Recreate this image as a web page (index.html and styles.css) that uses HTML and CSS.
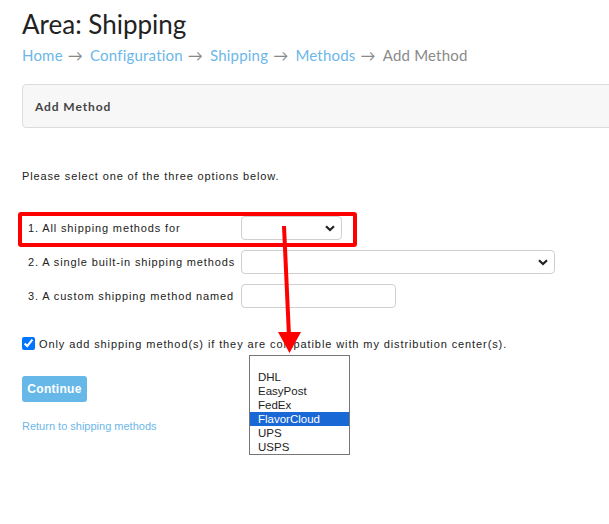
FILE: index.html
```html
<!DOCTYPE html>
<html>
<head>
<meta charset="utf-8">
<link rel="stylesheet" href="styles.css">
</head>
<body>
<div class="page">
  <h1 class="title">Area: Shipping</h1>
  <nav class="crumbs">
    <a>Home</a><span class="arr">→</span><a>Configuration</a><span class="arr">→</span><a>Shipping</a><span class="arr">→</span><a>Methods</a><span class="arr">→</span><span class="current">Add Method</span>
  </nav>
  <div class="panel"><span class="panel-title">Add Method</span></div>

  <p class="intro">Please select one of the three options below.</p>

  <div class="rows">
    <div class="row">
      <label class="lbl">1. All shipping methods for</label>
      <div class="select sel-short"><svg class="chev" width="10" height="7" viewBox="0 0 10 7"><path d="M1 1.2 L5 5 L9 1.2" fill="none" stroke="#222" stroke-width="2.2"/></svg></div>
    </div>
    <div class="row">
      <label class="lbl">2. A single built-in shipping methods</label>
      <div class="select sel-long"><svg class="chev" width="10" height="7" viewBox="0 0 10 7"><path d="M1 1.2 L5 5 L9 1.2" fill="none" stroke="#222" stroke-width="2.2"/></svg></div>
    </div>
    <div class="row">
      <label class="lbl">3. A custom shipping method named</label>
      <div class="textbox"></div>
    </div>
  </div>

  <label class="check">
    <input type="checkbox" checked>
    <span>Only add shipping method(s) if they are compatible with my distribution center(s).</span>
  </label>

  <button class="btn">Continue</button>

  <a class="back">Return to shipping methods</a>
</div>

<svg class="annot" width="609" height="524" viewBox="0 0 609 524">
  <rect x="20" y="214" width="335" height="31" fill="none" stroke="#ff0000" stroke-width="4" rx="1"/>
  <line x1="284" y1="226" x2="289" y2="336" stroke="#ff0000" stroke-width="4"/>
  <polygon points="278,332 301,332 289.5,353" fill="#ff0000"/>
</svg>

<ul class="dropdown">
  <li>&nbsp;</li>
  <li>DHL</li>
  <li>EasyPost</li>
  <li>FedEx</li>
  <li class="hl">FlavorCloud</li>
  <li>UPS</li>
  <li>USPS</li>
</ul>
</body>
</html>
```
FILE: styles.css
```css
html, body {
  margin: 0;
  padding: 0;
  background: #fff;
  overflow: hidden;
}
body {
  width: 609px;
  height: 524px;
  position: relative;
  font-family: "Liberation Sans", Arial, sans-serif;
}
.page {
  padding: 8px 0 0 22px;
  overflow: hidden;
}
.title {
  font-family: Lato, sans-serif;
  font-weight: 400;
  font-size: 26px;
  line-height: 32px;
  color: #222;
  margin: 0;
}
.crumbs {
  font-family: Lato, sans-serif;
  font-size: 15px;
  line-height: 20px;
  margin-top: 5px;
  color: #888;
  letter-spacing: 0.2px;
}
.crumbs a {
  color: #6cb7e8;
}
.crumbs .arr {
  color: #888;
  margin: 0 7px 0 5px;
}
.crumbs .current {
  color: #8a8a8a;
}
.panel {
  margin: 19px 0 0 0;
  width: 640px;
  height: 42px;
  border: 1px solid #dcdcdc;
  border-radius: 4px;
  background: #f7f7f7;
  display: flex;
  align-items: center;
  padding-left: 12px;
  box-sizing: content-box;
}
.panel-title {
  font-family: Lato, sans-serif;
  font-weight: 700;
  font-size: 12px;
  letter-spacing: 0.9px;
  color: #444;
}
.intro {
  margin: 41px 0 0 0;
  font-size: 11px;
  line-height: 14px;
  letter-spacing: 0.87px;
  color: #222;
}
.rows {
  margin-top: 33px;
  display: flex;
  flex-direction: column;
  gap: 10px;
}
.row {
  display: grid;
  grid-template-columns: 213px auto;
  align-items: center;
  padding-left: 6px;
  height: 24px;
}
.lbl {
  font-size: 11px;
  letter-spacing: 0.87px;
  color: #222;
  white-space: nowrap;
}
.select, .textbox {
  height: 22px;
  border: 1px solid #cfcfcf;
  border-radius: 4px;
  background: #fff;
  display: flex;
  align-items: center;
  justify-content: flex-end;
  padding-right: 6px;
}
.sel-short { width: 93px; }
.sel-long { width: 306px; }
.textbox { width: 147px; padding-right: 6px; }
.chev { display: block; }
.check {
  display: flex;
  align-items: center;
  margin-top: 29px;
  font-size: 11px;
  letter-spacing: 0.9px;
  color: #222;
}
.check input {
  margin: 0 4px 0 0;
  width: 13px;
  height: 13px;
  accent-color: #0075ff;
}
.btn {
  display: block;
  margin-top: 26px;
  width: 65px;
  height: 26px;
  border: none;
  border-radius: 3px;
  background: #66b8e8;
  color: #fff;
  font-family: "Liberation Sans", Arial, sans-serif;
  font-weight: 700;
  font-size: 12px;
  letter-spacing: 0.3px;
  padding: 0;
}
.back {
  display: block;
  margin-top: 17px;
  font-size: 11px;
  line-height: 14px;
  color: #6cb7e8;
}
.annot {
  position: absolute;
  left: 0;
  top: 0;
  pointer-events: none;
}
.dropdown {
  position: absolute;
  left: 249px;
  top: 355px;
  width: 99px;
  margin: 0;
  padding: 0;
  list-style: none;
  border: 1px solid #767676;
  background: #fff;
  font-size: 11.5px;
  line-height: 14px;
  color: #222;
}
.dropdown li {
  padding-left: 8px;
  height: 14px;
}
.dropdown li.hl {
  background: #1a68d6;
  color: #fff;
}
```
